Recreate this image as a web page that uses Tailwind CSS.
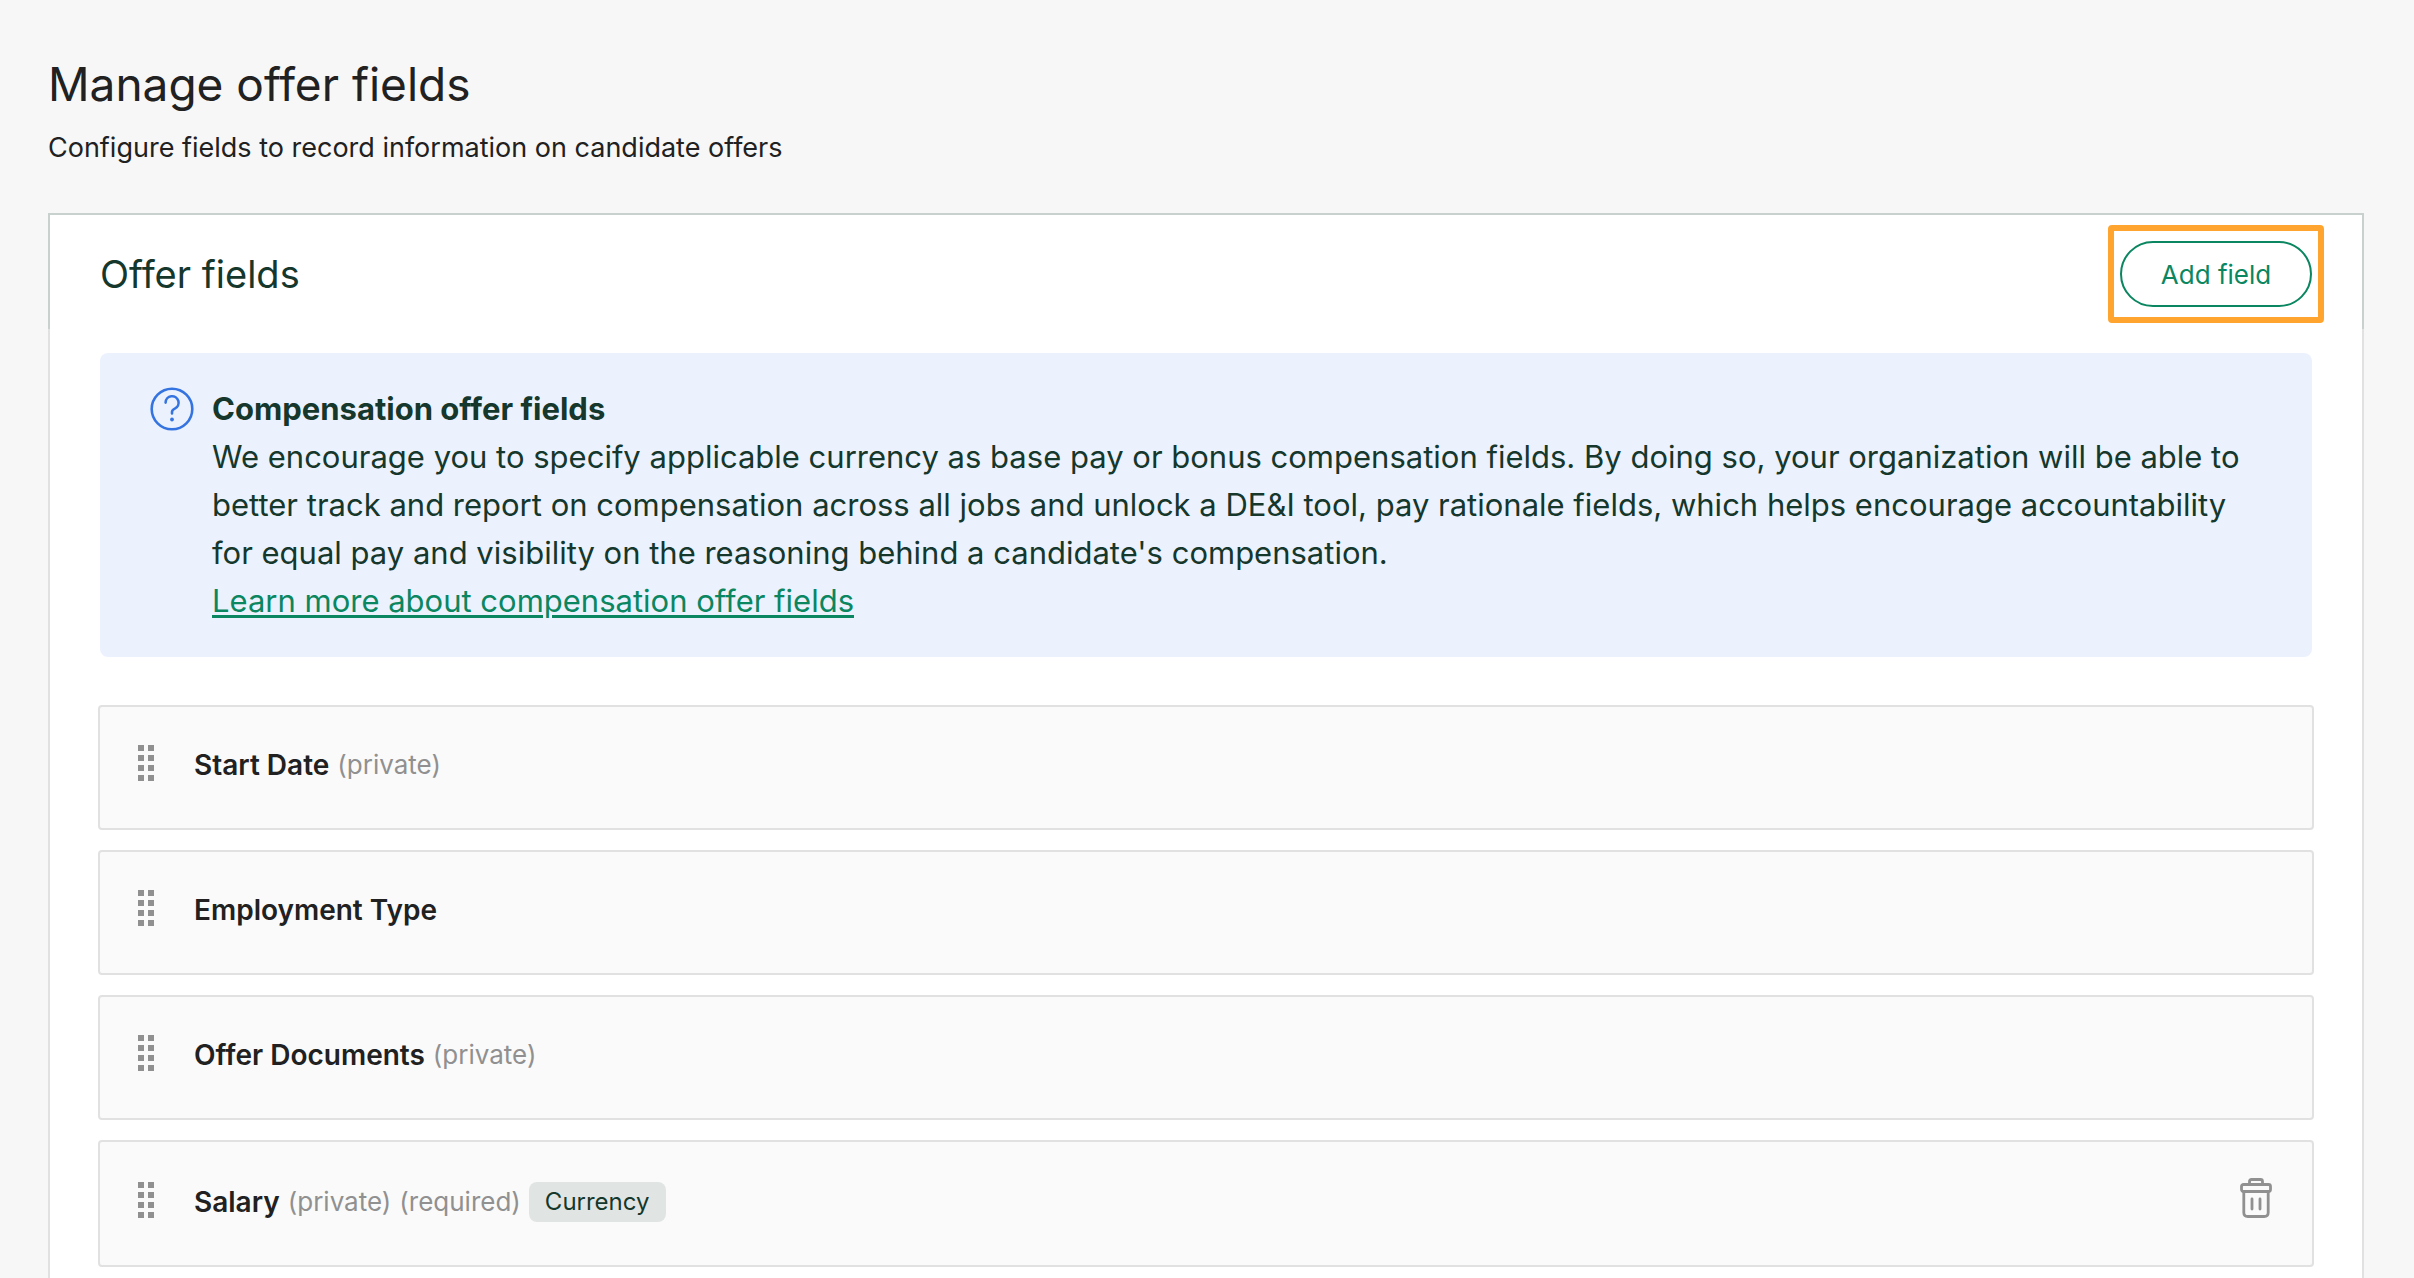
<!DOCTYPE html>
<html lang="en">
<head>
<meta charset="utf-8">
<meta name="viewport" content="width=device-width, initial-scale=1">
<title>Manage offer fields</title>
<script src="https://cdn.jsdelivr.net/npm/@tailwindcss/browser@4"></script>
</head>
<body class="bg-[#f7f7f7] font-['Inter','Liberation_Sans',sans-serif] text-[#212121]">
<svg class="hidden" aria-hidden="true">
  <symbol id="grip" viewBox="0 0 16 36">
    <path fill="#909090" d="M0 0h6v6H0zM10 0h6v6h-6zM0 10h6v6H0zM10 10h6v6h-6zM0 20h6v6H0zM10 20h6v6h-6zM0 30h6v6H0zM10 30h6v6h-6z"/>
  </symbol>
</svg>
<main class="pl-12 pr-[50px] pt-[52px]">
  <h1 class="text-[46px] leading-16">Manage offer fields</h1>
  <p class="mt-2 text-[27px] leading-12">Configure fields to record information on candidate offers</p>

  <section class="mt-[41px] bg-white">
    <header class="flex items-center justify-between border-2 border-b-0 border-[#c8d1ce] px-[50px] pt-[26px] pb-[22px] text-[#15372c]">
      <h2 class="text-[38px] leading-12">Offer fields</h2>
      <div class="relative">
        <button type="button" class="block h-[66px] w-[192px] rounded-full border-2 border-[#0a8660] bg-white text-[26px] text-[#0a8660]">Add field</button>
        <span class="pointer-events-none absolute -inset-x-3 -inset-y-4 rounded-sm border-6 border-[#ffa52f]"></span>
      </div>
    </header>

    <div class="border-x-2 border-[#e1e1e1] px-12 pt-6 pb-12">
      <aside class="mx-0.5 flex gap-[18px] rounded-lg bg-[#ebf2fe] py-8 pl-[50px] pr-12 text-[31px] leading-12 text-[#15372c]">
        <svg class="mt-0.5 size-11 shrink-0" viewBox="0 0 44 44" fill="none" stroke="#3574e0" stroke-width="2.6" stroke-linecap="round">
          <circle cx="22" cy="22" r="20.3"/>
          <path d="M15.6 15.6a6.5 6.5 0 1 1 9.2 6c-2 .9-2.8 1.6-2.8 3.4v1.5"/>
          <circle cx="22" cy="32.5" r="1.9" fill="#3574e0" stroke="none"/>
        </svg>
        <div>
          <h3 class="font-bold">Compensation offer fields</h3>
          <p>We encourage you to specify applicable currency as base pay or bonus compensation fields. By doing so, your organization will be able to better track and report on compensation across all jobs and unlock a DE&amp;I tool, pay rationale fields, which helps encourage accountability for equal pay and visibility on the reasoning behind a candidate's compensation.</p>
          <a href="#" class="block w-fit text-[#0a8660] underline decoration-3 underline-offset-3">Learn more about compensation offer fields</a>
        </div>
      </aside>

      <ul class="mt-12 flex flex-col gap-5 text-[26px] leading-10 text-[#909090]">
        <li class="flex h-[125px] items-start rounded border-2 border-[#e1e1e1] bg-[#fafafa] pl-[38px] pr-10 pt-[38px]">
          <svg class="mr-10 h-9 w-4 shrink-0"><use href="#grip"/></svg>
          <p class="flex gap-2"><strong class="text-[28px] font-semibold text-[#212121]">Start Date</strong><span>(private)</span></p>
        </li>
        <li class="flex h-[125px] items-start rounded border-2 border-[#e1e1e1] bg-[#fafafa] pl-[38px] pr-10 pt-[38px]">
          <svg class="mr-10 h-9 w-4 shrink-0"><use href="#grip"/></svg>
          <p class="flex gap-2"><strong class="text-[28px] font-semibold text-[#212121]">Employment Type</strong></p>
        </li>
        <li class="flex h-[125px] items-start rounded border-2 border-[#e1e1e1] bg-[#fafafa] pl-[38px] pr-10 pt-[38px]">
          <svg class="mr-10 h-9 w-4 shrink-0"><use href="#grip"/></svg>
          <p class="flex gap-2"><strong class="text-[28px] font-semibold text-[#212121]">Offer Documents</strong><span>(private)</span></p>
        </li>
        <li class="flex h-[127px] items-start rounded border-2 border-[#e1e1e1] bg-[#fafafa] pl-[38px] pr-10 pt-10">
          <svg class="mr-10 h-9 w-4 shrink-0"><use href="#grip"/></svg>
          <p class="flex items-center gap-2"><strong class="text-[28px] font-semibold text-[#212121]">Salary</strong><span>(private)</span><span>(required)</span><span class="rounded-lg bg-[#e0e5e3] px-4 text-2xl leading-10 text-[#15372c]">Currency</span></p>
          <button type="button" aria-label="Delete Salary" class="-mt-1 ml-auto">
            <svg class="h-10 w-8" viewBox="0 0 32 40" fill="none" stroke="#909090" stroke-width="2.8" stroke-linecap="round" stroke-linejoin="round">
              <path d="M9.5 6V3.500q0-2 2-2h9q2 0 2 2V6"/>
              <rect x="1.5" y="6.5" width="29" height="7" rx="2"/>
              <path d="M3.8 14v20.500q0 4 4 4h16.400q4 0 4-4V14M12 21v10M20 21v10"/>
            </svg>
          </button>
        </li>
      </ul>
    </div>
  </section>
</main>
</body>
</html>
